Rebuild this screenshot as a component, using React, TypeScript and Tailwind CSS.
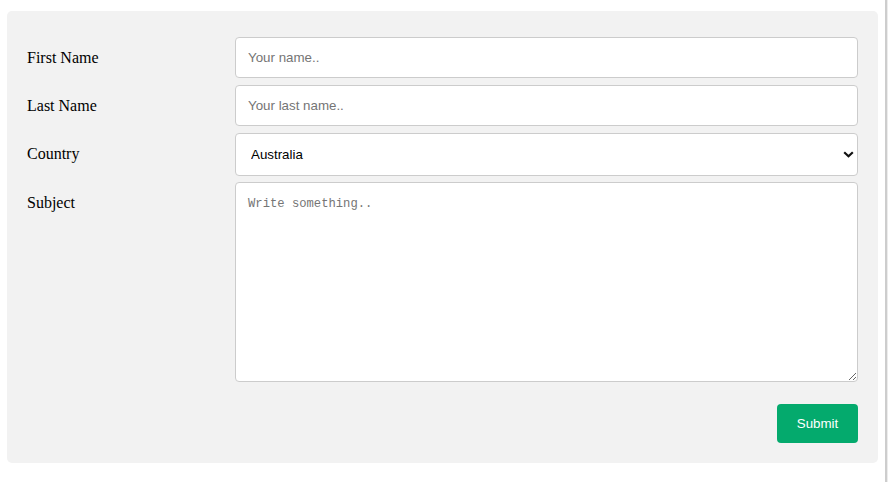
import React from "react";

const serif = { fontFamily: '"Liberation Serif", "Times New Roman", serif' };

function Row({ label, children }: { label: string; children: React.ReactNode }) {
  return (
    <div className="flex">
      <div className="w-[208px] shrink-0 pt-[6px]">
        <label
          className="block py-[12px] text-[16px] leading-[18px] text-black"
          style={serif}
        >
          {label}
        </label>
      </div>
      <div className="flex-1 pt-[6px]">{children}</div>
    </div>
  );
}

export default function App() {
  const inputCls =
    "block w-full h-[41px] rounded-[4px] border border-[#cccccc] bg-white px-[12px] text-[13.333px] text-black placeholder:text-[#757575] outline-none font-['Liberation_Sans',Arial,sans-serif]";
  return (
    <div className="flex h-[482px] w-[888px] bg-white">
      <div className="flex-1 pl-[7px] pt-[11px]">
        <div className="w-[871px] rounded-[5px] bg-[#f2f2f2] p-[20px]">
          <Row label="First Name">
            <input className={inputCls} placeholder="Your name.." />
          </Row>
          <Row label="Last Name">
            <input className={inputCls} placeholder="Your last name.." />
          </Row>
          <Row label="Country">
            <div className="relative">
              <select
                className="block h-[43px] w-full appearance-none rounded-[4px] border border-[#cccccc] bg-white pl-[15px] pr-[30px] text-[13.333px] text-black outline-none font-['Liberation_Sans',Arial,sans-serif]"
                defaultValue="australia"
              >
                <option value="australia">Australia</option>
                <option value="canada">Canada</option>
                <option value="usa">USA</option>
              </select>
              <svg
                className="pointer-events-none absolute left-[608px] top-[18px]"
                width="11"
                height="7"
                viewBox="0 0 11 7"
              >
                <path
                  d="M1.2 1.2 L5.5 5.2 L9.8 1.2"
                  fill="none"
                  stroke="#111"
                  strokeWidth="2.2"
                />
              </svg>
            </div>
          </Row>
          <Row label="Subject">
            <textarea
              className="block h-[200px] w-full resize-y rounded-[4px] border border-[#cccccc] bg-white px-[12px] py-[13px] text-[12.2px] leading-[16px] text-black placeholder:text-[#757575] outline-none font-['Liberation_Mono',monospace]"
              placeholder="Write something.."
            />
          </Row>
          <div className="flex justify-end pt-[22px]">
            <button className="h-[39px] w-[81px] rounded-[4px] bg-[#04aa6d] text-[13.333px] text-white font-['Liberation_Sans',Arial,sans-serif]">
              Submit
            </button>
          </div>
        </div>
      </div>
      <div className="w-[2px] bg-[#cdcdcd]" />
      <div className="w-[1px] bg-[#ececec]" />
    </div>
  );
}
